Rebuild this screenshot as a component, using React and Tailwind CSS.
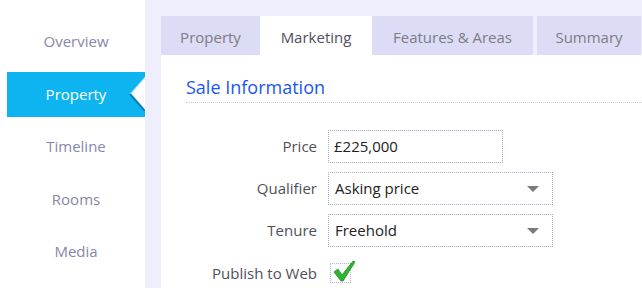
import { useState } from 'react';

const sideItems = ['Overview', 'Property', 'Timeline', 'Rooms', 'Media'];

const tabs = [
    { label: 'Property', width: 'w-[99px]' },
    { label: 'Marketing', width: 'w-[112px]' },
    { label: 'Features & Areas', width: 'w-[161px]' },
    { label: 'Summary', width: 'w-[104px]' },
];

const Arrow = () => (
    <svg width="12" height="6" viewBox="0 0 12 6" className="shrink-0">
        <polygon points="0,0 12,0 6,6" fill="#7a7a7a" />
    </svg>
);

const App = () => {
    const [activeSide] = useState('Property');
    const [activeTab] = useState('Marketing');

    return (
        <div className="w-[642px] h-[288px] flex overflow-hidden bg-[#eeeefc] font-['Open_Sans',sans-serif] text-[15px]">
            {/* Sidebar */}
            <div className="w-[145px] h-full bg-white pt-[19px] pl-[7px] flex flex-col gap-[7.5px]">
                {sideItems.map((item) => (
                    item === activeSide ? (
                        <div key={item} className="relative h-[45px] bg-[#0db4f0] text-white flex items-center justify-center">
                            {item}
                            <svg width="16" height="34" viewBox="0 0 16 34" className="absolute right-0 top-[5px]">
                                <polygon points="16,0 1,17 16,34" fill="white" />
                                <line x1="1" y1="17" x2="16" y2="34" stroke="#0a7fb0" strokeWidth="2" />
                                <line x1="1" y1="17" x2="16" y2="0" stroke="#6fd3f6" strokeWidth="1" />
                            </svg>
                        </div>
                    ) : (
                        <div key={item} className="h-[45px] text-[#8787a8] flex items-center justify-center">
                            {item}
                        </div>
                    )
                ))}
            </div>

            {/* Main */}
            <div className="flex-1 flex flex-col pl-[16px] pt-[16px]">
                <div className="h-[39px] flex">
                    {tabs.map((tab, i) => (
                        <div
                            key={tab.label}
                            className={`${tab.width} h-full flex items-center justify-center pt-[3px] ${i === 2 ? 'mr-[4px]' : ''} ${
                                tab.label === activeTab ? 'bg-white text-[#505062]' : 'bg-[#dcdcf7] text-[#7c7c84]'
                            }`}
                        >
                            {tab.label}
                        </div>
                    ))}
                </div>

                <div className="flex-1 bg-white pl-[25px]">
                    <div className="mt-[21px] h-[27px] border-b border-dotted border-[#c8c8dc] text-[18px] leading-[22px] text-[#1a56f5]">
                        Sale Information
                    </div>

                    <div className="mt-[27px] flex flex-col">
                        <div className="flex items-center h-[33px]">
                            <div className="w-[131px] text-right text-[#505058]">Price</div>
                            <div className="ml-[11px] w-[175px] h-[33px] border border-dotted border-[#a9a9c6] flex items-center pl-[5px] text-[#222]">
                                £225,000
                            </div>
                        </div>

                        <div className="flex items-center h-[33px] mt-[9px]">
                            <div className="w-[131px] text-right text-[#505058]">Qualifier</div>
                            <div className="ml-[11px] w-[225px] h-[33px] border border-dotted border-[#a9a9c6] flex items-center justify-between pl-[6px] pr-[13px] text-[#222]">
                                <span>Asking price</span>
                                <Arrow />
                            </div>
                        </div>

                        <div className="flex items-center h-[33px] mt-[9px]">
                            <div className="w-[131px] text-right text-[#505058]">Tenure</div>
                            <div className="ml-[11px] w-[225px] h-[33px] border border-dotted border-[#a9a9c6] flex items-center justify-between pl-[6px] pr-[13px] text-[#222]">
                                <span>Freehold</span>
                                <Arrow />
                            </div>
                        </div>

                        <div className="flex items-center h-[20px] mt-[16px]">
                            <div className="w-[131px] text-right text-[#505058]">Publish to Web</div>
                            <div className="relative ml-[13px] w-[21px] h-[20px] border border-dotted border-[#b4b4dc]">
                                <svg width="24" height="24" viewBox="0 0 24 24" className="absolute left-[1px] top-[-5px]">
                                    <path d="M2 13 L6 10 L10 16 L21 2 L23 3 L11 22 L9 22 Z" fill="#2fb52f" stroke="#1e8a1e" strokeWidth="0.8" strokeLinejoin="round" />
                                </svg>
                            </div>
                        </div>
                    </div>
                </div>
            </div>
        </div>
    );
};

export default App;
